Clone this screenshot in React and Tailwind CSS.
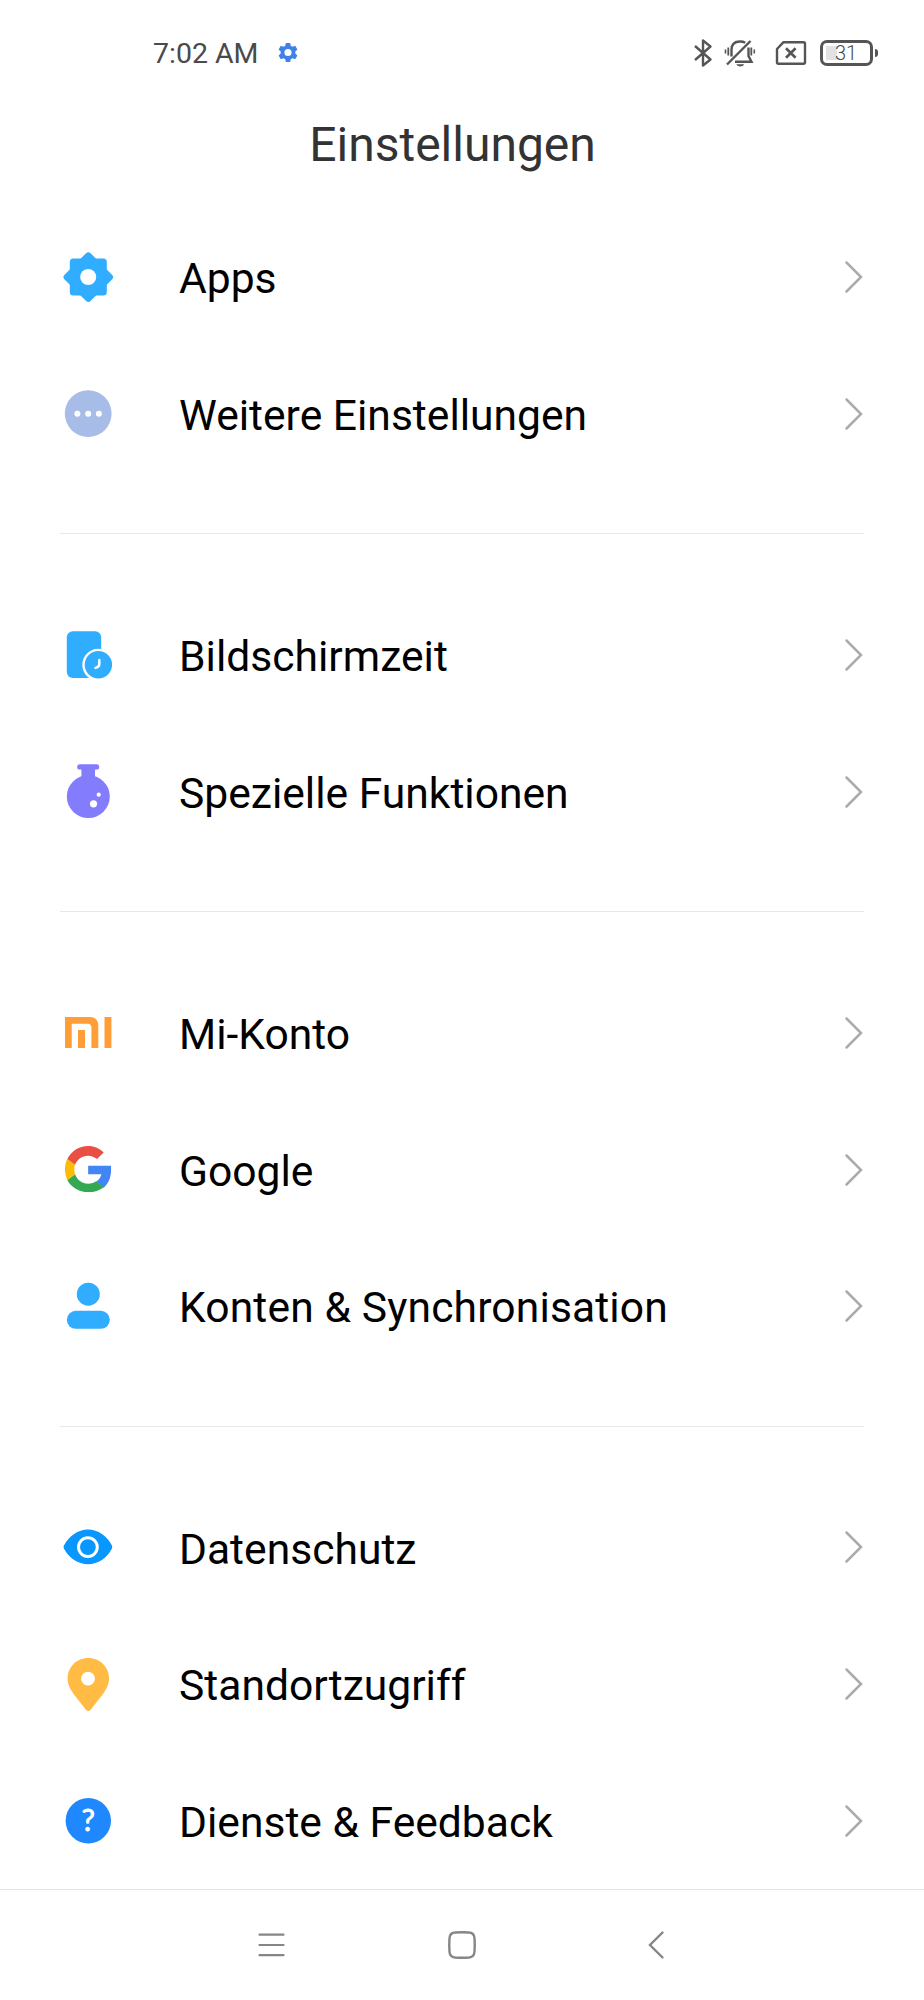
import React from 'react';

const AppsIcon = () => (
  <svg viewBox="0 0 56 56" className="h-14 w-14 overflow-visible">
    <g fill="#30adff">
      <rect x="9.8" y="9.6" width="37" height="37" rx="3.5" />
      <rect x="9.8" y="9.6" width="37" height="37" rx="3.5" transform="rotate(45 28.3 28.1)" />
    </g>
    <circle cx="28.2" cy="28" r="8" fill="#fff" />
  </svg>
);

const MoreIcon = () => (
  <svg viewBox="0 0 56 56" className="h-14 w-14">
    <circle cx="28.2" cy="27.6" r="23.4" fill="#a8bce8" />
    <g fill="#fff">
      <circle cx="17.4" cy="27.7" r="3" />
      <circle cx="28.2" cy="27.7" r="3" />
      <circle cx="38.9" cy="27.7" r="3" />
    </g>
  </svg>
);

const ScreenTimeIcon = () => (
  <svg viewBox="0 0 56 56" className="h-14 w-14">
    <rect x="6.8" y="4.3" width="34.4" height="46.6" rx="6" fill="#30adff" />
    <circle cx="38.4" cy="37.8" r="14.9" fill="#30adff" stroke="#fff" strokeWidth="2.4" />
    <path d="M39.3 33v4.2q0 2.6-3.8 3.7" fill="none" stroke="#fff" strokeWidth="2.5" strokeLinecap="round" />
  </svg>
);

const FlaskIcon = () => (
  <svg viewBox="0 0 56 56" className="h-14 w-14 overflow-visible">
    <g fill="#837dfd">
      <rect x="17.2" y="0.3" width="22" height="5.2" rx="2.6" />
      <path d="M20 4h16.400q-1.400 1-1.400 2.500V14H21.400V6.500Q21.400 5 20 4z" />
      <circle cx="28.300" cy="32.600" r="21.500" />
    </g>
    <circle cx="33.500" cy="39.800" r="3.600" fill="#fff" />
    <circle cx="38.700" cy="30.700" r="2.100" fill="#fff" />
  </svg>
);

const MiIcon = () => (
  <svg viewBox="0 0 56 56" className="h-14 w-14">
    <g fill="#ff9d37">
      <path d="M5 12h24.500Q38.300 12 38.300 20.800V43H31.400V22.500Q31.400 18.700 27.600 18.700H11.700V43H5z" />
      <rect x="18" y="25" width="7" height="18" />
      <rect x="44.500" y="12" width="6.900" height="31" />
    </g>
  </svg>
);

const GoogleIcon = () => (
  <svg viewBox="0 0 56 56" className="h-14 w-14">
    <svg x="5" y="4" width="46.300" height="46.300" viewBox="1 1 22 22">
      <path fill="#4285f4" d="M22.900 10.400H12v4h6.300c-.4 1.500-1.200 2.700-2.500 3.500l3.600 2.900C21.900 18.700 23.200 15.300 22.900 10.400z" />
      <path fill="#34a853" d="M12 23c3 0 5.500-.8 7.500-2.500l-3.700-2.700c-1 .7-2.200 1.100-3.800 1.100-2.900 0-5.300-1.900-6.200-4.500l-3.700 2.800C3.900 20.700 7.700 23 12 23z" />
      <path fill="#fbbc05" d="M5.800 14.400C5.300 12.800 5.300 11.300 5.800 9.600L2.100 7.200c-1.500 3-1.500 6.600 0 10z" />
      <path fill="#ea4f43" d="M12 5.600c1.700 0 3 .6 4.200 1.600l3.200-3.100C17.400 2.200 15 1 12 1 7.700 1 3.900 3.400 2.100 7.200l3.700 2.600C6.700 7.500 9.100 5.600 12 5.600z" />
    </svg>
  </svg>
);

const AccountIcon = () => (
  <svg viewBox="0 0 56 56" className="h-14 w-14">
    <g fill="#30adff">
      <circle cx="28.300" cy="16.200" r="11.500" />
      <rect x="6.800" y="32.800" width="43" height="18" rx="9" />
    </g>
  </svg>
);

const EyeIcon = () => (
  <svg viewBox="0 0 56 56" className="h-14 w-14">
    <path d="M3.900 26.500C9 17 18 10.600 28 10.600s19 6.400 23.900 15.900q.7 1.500 0 3C47 39 38 45.200 28 45.200S9 39 3.900 29.500q-.7-1.500 0-3z" fill="#0896ff" />
    <circle cx="27.900" cy="28.100" r="9.400" fill="none" stroke="#fff" strokeWidth="3" />
  </svg>
);

const PinIcon = () => (
  <svg viewBox="0 0 56 56" className="h-14 w-14">
    <path d="M28.300 2C16.500 2 7.600 11 7.600 22.500c0 6 2.600 10.700 6.200 15.700L25.700 53.500q2.600 3 5.200 0L42.800 38.200C46.400 33.200 49 28.500 49 22.500 49 11 40 2 28.300 2z" fill="#ffbb44" />
    <circle cx="28" cy="22.700" r="6.900" fill="#fff" />
  </svg>
);

const HelpIcon = () => (
  <svg viewBox="0 0 56 56" className="h-14 w-14">
    <circle cx="28.300" cy="27.700" r="22.700" fill="#1f88ff" />
    <text x="28.300" y="38.300" textAnchor="middle" fill="#fff" stroke="#fff" strokeWidth="0.800" fontFamily="Lato, sans-serif" fontSize="30">?</text>
  </svg>
);

const groups = [
  [
    { label: 'Apps', Icon: AppsIcon },
    { label: 'Weitere Einstellungen', Icon: MoreIcon },
  ],
  [
    { label: 'Bildschirmzeit', Icon: ScreenTimeIcon },
    { label: 'Spezielle Funktionen', Icon: FlaskIcon },
  ],
  [
    { label: 'Mi-Konto', Icon: MiIcon },
    { label: 'Google', Icon: GoogleIcon },
    { label: 'Konten & Synchronisation', Icon: AccountIcon, tracking: 'tracking-[0.13px]' },
  ],
  [
    { label: 'Datenschutz', Icon: EyeIcon },
    { label: 'Standortzugriff', Icon: PinIcon },
    { label: 'Dienste & Feedback', Icon: HelpIcon },
  ],
];

const StatusBar = () => (
  <div className="flex h-[106px] items-center pl-[153px] pr-[46px] text-[#4a4a4a]">
    <span className="pt-[2px] text-[28.500px] leading-8">7:02 AM</span>
    <svg viewBox="0 0 24 24" className="ml-[17px] h-6 w-6">
      <path
        fill="#4080ea"
        fillRule="evenodd"
        d="M9.800 2h4.400l.5 2.700 1.900 1.100 2.600-1 2.200 3.800-2.100 1.800v2.200l2.100 1.800-2.200 3.800-2.600-1-1.900 1.100-.5 2.700H9.800l-.5-2.700-1.900-1.100-2.600 1-2.200-3.800 2.100-1.800v-2.200L2.600 8.600l2.200-3.800 2.600 1 1.900-1.100zM12 7.900a3.600 3.600 0 1 0 0 7.200 3.600 3.600 0 0 0 0-7.200z"
      />
    </svg>
    <div className="ml-auto flex items-center">
      {/* Bluetooth */}
      <svg viewBox="0 0 20 30" className="h-[30px] w-5" fill="none" stroke="#555" strokeWidth="2.400">
        <path d="M2 8l15.500 13.500-7.500 6V2.500l7.500 6L2 22" strokeLinejoin="round" />
      </svg>
      {/* Muted bell */}
      <svg viewBox="0 0 32 30" className="ml-[11px] h-[30px] w-8" fill="none" stroke="#555" strokeWidth="2.400">
        <path d="M7.500 18.500V12q0-8.500 8.500-8.500 3.200 0 5.200 1.300M24.500 9.500v8.500l3 5.800H11" />
        <path d="M3 26.500L26.500 3" strokeWidth="2.400" />
        <path d="M4.300 9.500v8M27.300 9.500v8" strokeWidth="1.800" />
        <path d="M1.500 11.500v4M30.300 11.500v4" strokeWidth="1.600" />
        <path d="M12.200 26.300h8.200q-1.400 2.200-4.100 2.200t-4.100-2.200z" fill="#555" stroke="none" />
      </svg>
      {/* Missing SIM */}
      <svg viewBox="0 0 32 26" className="ml-[19px] h-[26px] w-8" fill="none" stroke="#555" strokeWidth="2.400">
        <path d="M8.500 2.200h20q1.500 0 1.500 1.500v18.600q0 1.500-1.500 1.500h-25Q2 23.800 2 22.300V9z" strokeLinejoin="round" />
        <path d="M11 8.300l9.600 9.400M20.600 8.300L11 17.700" strokeWidth="2.600" />
      </svg>
      {/* Battery */}
      <div className="ml-[13px] flex h-[26px] w-[53px] items-center justify-center rounded-[7px] border-[3px] border-[#555] bg-linear-to-r from-[#e2e2e2] from-30% to-white to-30% bg-clip-content p-[3px]">
        <span className="pr-px pt-px text-[20px] font-light leading-none">31</span>
      </div>
      <div className="ml-[2px] h-2 w-[3px] rounded-r-sm bg-[#555]" />
    </div>
  </div>
);

const SettingsRow = ({ label, Icon, tracking = 'tracking-normal' }) => (
  <li className="flex h-[136.67px] items-center pl-[60px] pr-[60px]">
    <Icon />
    <span className={`ml-[63px] flex-1 pt-[3px] text-[42.600px] leading-none text-black ${tracking}`}>{label}</span>
    <svg viewBox="0 0 20 34" className="h-[34px] w-5" fill="none" stroke="#ababab" strokeWidth="2.500">
      <path d="M2.500 2.500L17 17 2.500 31.500" strokeLinecap="round" />
    </svg>
  </li>
);

const NavBar = () => (
  <nav className="flex h-[111px] items-center border-t border-[#e4e4e4] pl-[256px]">
    <svg viewBox="0 0 30 30" className="h-[30px] w-[30px]" fill="none" stroke="#868686" strokeWidth="2.200" strokeLinecap="round">
      <path d="M3.500 4.700h24M3.500 15h24M3.500 25.200h24" />
    </svg>
    <svg viewBox="0 0 30 30" className="ml-[161px] h-[30px] w-[30px]" fill="none" stroke="#868686" strokeWidth="2.400">
      <path d="M8 2.500q7-.6 14 0 5 .3 5.500 5.500.5 7 0 14-.5 5-5.500 5.500-7 .5-14 0-5-.5-5.500-5.500-.5-7 0-14Q3 2.800 8 2.500z" />
    </svg>
    <svg viewBox="0 0 18 30" className="ml-[170px] h-[30px] w-[18px]" fill="none" stroke="#868686" strokeWidth="2.400" strokeLinecap="round">
      <path d="M15.500 2.500L3 15l12.500 12.500" />
    </svg>
  </nav>
);

const App = () => {
  return (
    <div className="flex h-[2000px] w-[924px] flex-col overflow-hidden bg-white font-['Roboto',sans-serif]">
      <StatusBar />
      <header className="flex h-[103px] justify-center pr-[19px] pt-[11px]">
        <h1 className="text-[48px] leading-[56px] text-[#333]">Einstellungen</h1>
      </header>
      <main className="flex-1">
        {groups.map((items, index) => (
          <React.Fragment key={items[0].label}>
            {index > 0 && <hr className="mx-[60px] mb-[52.600px] mt-[51px] border-[#e8e8e8]" />}
            <ul>
              {items.map((item) => (
                <SettingsRow key={item.label} {...item} />
              ))}
            </ul>
          </React.Fragment>
        ))}
      </main>
      <NavBar />
    </div>
  );
};

export default App;
